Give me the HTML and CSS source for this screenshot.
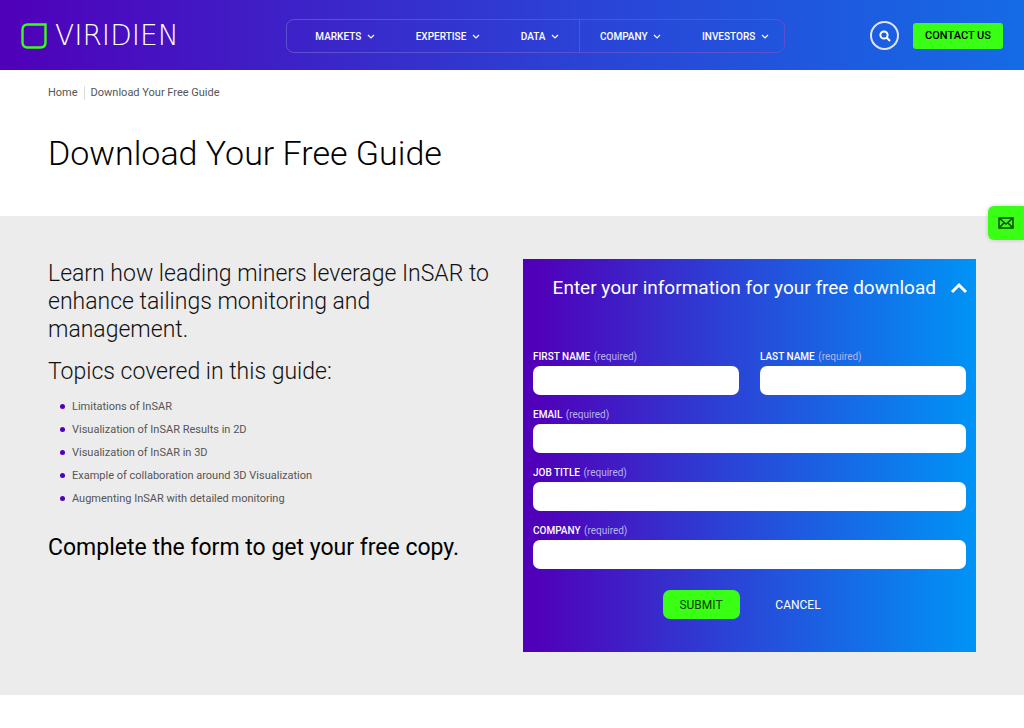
FILE: index.html
```
<!DOCTYPE html>
<html lang="en">
<head>
	<meta charset="utf-8">
	<meta name="viewport" content="width=device-width, initial-scale=1">
	<title>Download Your Free Guide</title>
	<link rel="stylesheet" href="styles.css">
</head>
<body>
	<header class="header">
		<a class="logo" href="#">
			<svg class="logo-mark" viewBox="0 0 26 26">
				<path d="M7 1.5H24.5V19.5Q24.5 24.5 19.5 24.5H6.5Q1.5 24.5 1.5 19.5V7Q1.5 1.5 7 1.5Z"/>
			</svg>
			<span class="logo-text">VIRIDIEN</span>
		</a>
		<nav class="nav">
			<div class="nav-group">
				<a href="#">MARKETS <svg class="chevron" viewBox="0 0 8 6"><path d="M1 1l3 3 3-3"/></svg></a>
				<a href="#">EXPERTISE <svg class="chevron" viewBox="0 0 8 6"><path d="M1 1l3 3 3-3"/></svg></a>
				<a href="#">DATA <svg class="chevron" viewBox="0 0 8 6"><path d="M1 1l3 3 3-3"/></svg></a>
			</div>
			<div class="nav-group">
				<a href="#">COMPANY <svg class="chevron" viewBox="0 0 8 6"><path d="M1 1l3 3 3-3"/></svg></a>
				<a href="#">INVESTORS <svg class="chevron" viewBox="0 0 8 6"><path d="M1 1l3 3 3-3"/></svg></a>
			</div>
		</nav>
		<div class="header-actions">
			<button class="search" type="button" aria-label="Search">
				<svg viewBox="0 0 12 12"><circle cx="5" cy="5" r="3.6"/><path d="M7.8 7.8L11 11"/></svg>
			</button>
			<a class="contact" href="#">CONTACT US</a>
		</div>
	</header>

	<div class="intro">
		<div class="breadcrumb">
			<a href="#">Home</a>
			<span>Download Your Free Guide</span>
		</div>
		<h1>Download Your Free Guide</h1>
	</div>

	<main class="content">
		<section class="guide">
			<p class="lead">Learn how leading miners leverage InSAR to enhance tailings monitoring and management.</p>
			<p class="lead">Topics covered in this guide:</p>
			<ul>
				<li>Limitations of InSAR</li>
				<li>Visualization of InSAR Results in 2D</li>
				<li>Visualization of InSAR in 3D</li>
				<li>Example of collaboration around 3D Visualization</li>
				<li>Augmenting InSAR with detailed monitoring</li>
			</ul>
			<h2>Complete the form to get your free copy.</h2>
		</section>

		<form class="form">
			<button class="form-title" type="button">
				Enter your information for your free download
				<svg viewBox="0 0 18 12"><path d="M2 10l7-7 7 7"/></svg>
			</button>
			<div class="fields">
				<div class="field half">
					<label for="first-name">FIRST NAME <small>(required)</small></label>
					<input type="text" id="first-name">
				</div>
				<div class="field half">
					<label for="last-name">LAST NAME <small>(required)</small></label>
					<input type="text" id="last-name">
				</div>
				<div class="field">
					<label for="email">EMAIL <small>(required)</small></label>
					<input type="email" id="email">
				</div>
				<div class="field">
					<label for="job-title">JOB TITLE <small>(required)</small></label>
					<input type="text" id="job-title">
				</div>
				<div class="field">
					<label for="company">COMPANY <small>(required)</small></label>
					<input type="text" id="company">
				</div>
			</div>
			<div class="form-buttons">
				<button class="submit" type="submit">SUBMIT</button>
				<button class="cancel" type="reset">CANCEL</button>
			</div>
		</form>
	</main>

	<a class="mail-tab" href="#" aria-label="Email us">
		<svg viewBox="0 0 16 12"><path d="M1 1h14v10H1zM1 1l7 6 7-6M1 11l5-5M15 11l-5-5"/></svg>
	</a>
</body>
</html>
```

FILE: styles.css
```
* {
	margin: 0;
	padding: 0;
	box-sizing: border-box;
}

body {
	font-family: Roboto, "Liberation Sans", sans-serif;
	font-size: 11px;
	color: #555;
	background: #fff;
}

a {
	color: inherit;
	text-decoration: none;
}

button {
	font-family: inherit;
	border: none;
	background: none;
	cursor: pointer;
}

svg {
	fill: none;
	stroke: currentColor;
}

/* header */
.header {
	display: flex;
	align-items: center;
	justify-content: space-between;
	height: 70px;
	padding: 1px 21px 0;
	color: #fff;
	background: linear-gradient(90deg, #5000b9, #2b42d6 56%, #156be6);
}

.logo {
	display: flex;
	align-items: center;
	gap: 8px;
	width: 180px;
}

.logo-mark {
	width: 26px;
	height: 26px;
	stroke: #39ff14;
	stroke-width: 2.4;
}

.logo-text {
	font-family: "DejaVu Sans", sans-serif;
	font-weight: 200;
	font-size: 28px;
	line-height: 28px;
}

.nav {
	display: flex;
	height: 34px;
	border: 1px solid #5a50d2;
	border-radius: 8px;
	font-size: 10px;
	font-weight: 500;
}

.nav-group {
	display: flex;
	align-items: center;
	gap: 41px;
	padding: 2px 20px 0 28px;
}

.nav-group + .nav-group {
	border-left: 1px solid #5a50d2;
	padding: 2px 15px 0 20px;
}

.chevron {
	width: 8px;
	height: 6px;
	margin-left: 3px;
	stroke-width: 1.2;
}

.header-actions {
	display: flex;
	align-items: center;
	gap: 14px;
}

.search {
	display: flex;
	align-items: center;
	justify-content: center;
	width: 29px;
	height: 29px;
	border: 2px solid #dfe3fb;
	border-radius: 50%;
	color: #fff;
}

.search svg {
	width: 12px;
	height: 12px;
	stroke-width: 2;
}

.contact {
	padding: 0 12px;
	font-size: 11px;
	font-weight: 500;
	line-height: 26px;
	color: #000;
	background: #39ff14;
	border-radius: 3px;
}

/* title area */
.intro {
	height: 146px;
	padding: 16px 48px 0;
}

.breadcrumb {
	display: flex;
	line-height: 14px;
}

.breadcrumb span {
	margin-left: 6px;
	padding-left: 6px;
	border-left: 1px solid #ddd;
}

h1 {
	margin-top: 31px;
	font-size: 34px;
	font-weight: 300;
	line-height: 44px;
	color: #000;
}

/* content */
.content {
	display: grid;
	grid-template-columns: 1fr 1fr;
	align-items: start;
	gap: 22px;
	padding: 43px 48px;
	background: #ececec;
}

.lead {
	margin-bottom: 14px;
	font-size: 23px;
	font-weight: 300;
	line-height: 28px;
	color: #111;
}

.guide {
	padding-top: 1px;
}

.guide ul {
	margin-top: -5px;
	list-style: none;
	line-height: 23px;
}

.guide li {
	display: flex;
	align-items: center;
	gap: 7px;
	padding-left: 12px;
}

.guide li::before {
	content: "";
	width: 5px;
	height: 5px;
	border-radius: 50%;
	background: #5000b9;
}

h2 {
	margin-top: 24px;
	font-size: 23px;
	font-weight: 400;
	line-height: 28px;
	color: #000;
}

/* form */
.form {
	padding: 15px 8px 33px;
	color: #fff;
	background: linear-gradient(90deg, #5000b9 3%, #2b42d6 45%, #0094f6);
}

.form-title {
	display: flex;
	align-items: center;
	justify-content: flex-end;
	gap: 14px;
	width: 100%;
	font-size: 19px;
	line-height: 28px;
	color: #fff;
}

.form-title svg {
	width: 18px;
	height: 12px;
	stroke-width: 3;
}

.fields {
	display: grid;
	grid-template-columns: 1fr 1fr;
	gap: 11px 21px;
	margin-top: 46px;
	padding: 0 2px;
}

.field {
	grid-column: span 2;
}

.half {
	grid-column: span 1;
}

.field label {
	display: block;
	font-size: 10px;
	font-weight: 500;
	line-height: 18px;
}

.field small {
	margin-left: 1px;
	font-size: 10px;
	font-weight: 400;
	color: #b9b4ee;
}

.field input {
	display: block;
	width: 100%;
	height: 29px;
	padding: 0 8px;
	border: none;
	border-radius: 7px;
	background: #fff;
}

.form-buttons {
	display: flex;
	justify-content: center;
	gap: 20px;
	margin-top: 21px;
}

.form-buttons button {
	width: 77px;
	padding-top: 1px;
	font-size: 12px;
	line-height: 28px;
	border-radius: 7px;
}

.submit {
	color: #123c0c;
	background: #39ff14;
}

.form-buttons .cancel {
	color: #fff;
}

/* mail button on the right edge */
.mail-tab {
	position: fixed;
	right: 0;
	top: 206px;
	display: flex;
	align-items: center;
	width: 36px;
	height: 34px;
	padding-left: 10px;
	color: #0d4a06;
	background: #39ff14;
	border-radius: 6px 0 0 6px;
	box-shadow: 0 0 4px rgba(0, 0, 0, 0.2);
}

.mail-tab svg {
	width: 16px;
	height: 12px;
	stroke-width: 1.5;
}
```
